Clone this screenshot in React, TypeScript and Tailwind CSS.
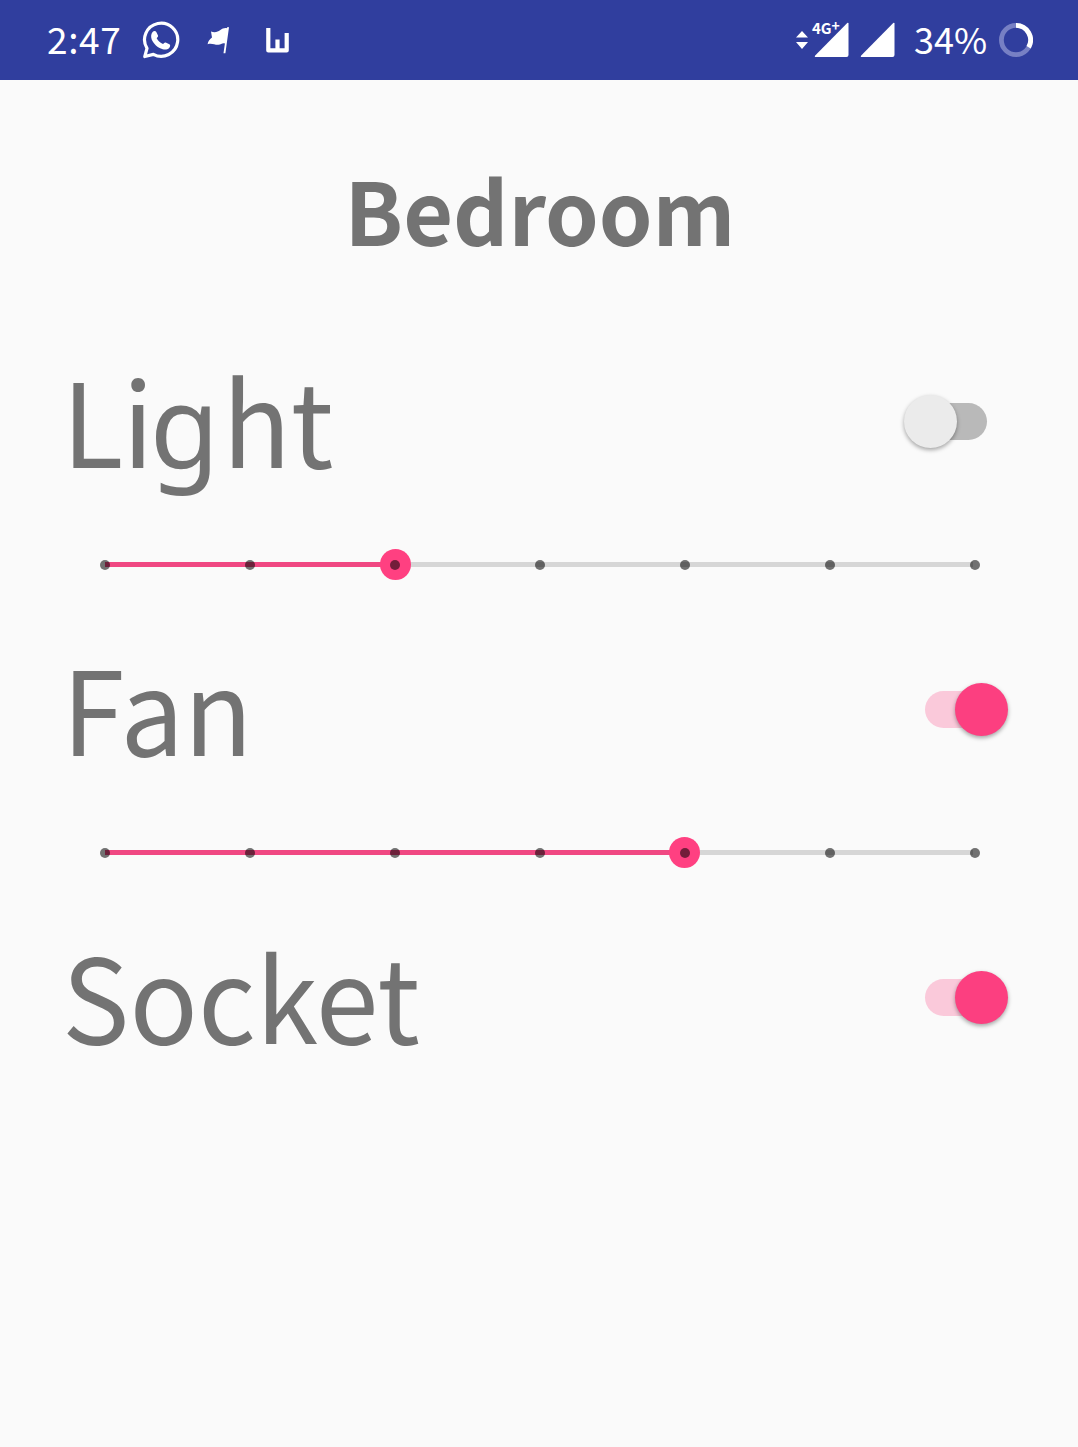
import type { ReactNode } from "react";

const steps = [0, 1, 2, 3, 4, 5, 6];

function Switch({ on }: { on: boolean }) {
  return (
    <div
      role="switch"
      aria-checked={on}
      className={`relative h-[37px] w-[62px] rounded-full ${on ? "bg-[#fac9da]" : "bg-[#b9b9b9]"}`}
    >
      <span
        className={`absolute top-[-8px] size-[53px] rounded-full shadow-[0_2px_4px_rgba(0,0,0,0.35)] ${
          on ? "left-[30px] bg-[#fc3f80]" : "left-[-21px] bg-[#ebebeb]"
        }`}
      />
    </div>
  );
}

function Slider({ value }: { value: number }) {
  return (
    <div className="flex h-36 items-center px-[105px] pb-[2px]">
      <div className="relative h-[5px] w-[870px] bg-[#d6d6d6]">
        <div className="h-full bg-[#f04882]" style={{ width: value * 145 }} />
        <span
          className="absolute top-[-13px] size-[31px] -translate-x-[15px] rounded-full bg-[#ff4081]"
          style={{ left: value * 144.8 }}
        />
        {steps.map((s) => (
          <span
            key={s}
            className="absolute top-[-2px] size-[10px] -translate-x-[5px] rounded-full bg-black/55"
            style={{ left: s * 145 }}
          />
        ))}
      </div>
    </div>
  );
}

function Row({ label, on }: { label: ReactNode; on: boolean }) {
  return (
    <div className="flex h-36 items-center justify-between pr-[91px] pl-[62px]">
      <span className="mt-[-8px] block origin-left scale-x-[0.975] text-[116px] leading-[144px] whitespace-nowrap text-[#737373]">
        {label}
      </span>
      <Switch on={on} />
    </div>
  );
}

function StatusBar() {
  return (
    <header className="flex h-20 items-center bg-[#303e9e] text-[36px] leading-none text-white">
      <span className="mt-[-4px] ml-[47px] w-[74px] text-[37px] tracking-[0.6px] whitespace-nowrap">2:47</span>
      <svg className="ml-[21px] size-[38px]" viewBox="0 0 38 38" fill="none">
        <path d="M2.8 35.5 5 27.4A16.6 16.6 0 1 1 11.4 33.4Z" stroke="white" strokeWidth="3.2" strokeLinejoin="round" />
        <path
          d="M10.600 11c1-1.300 3-1.400 3.700 0l1.700 3.600c.4 1-.7 2-1.300 2.700 1.500 2.700 3.600 4.600 6.300 5.800.7-.7 1.700-2 2.700-1.600l3.700 1.800c1.300.7.7 2.600-.2 3.600-1.600 1.700-4.200 2-6.500 1.300-5-1.500-9.300-5.600-11-9.800-1-2.800-.6-5.600.9-7.400Z"
          fill="white"
        />
      </svg>
      <svg className="ml-[27px] h-[28px] w-[22px]" viewBox="0 0 22 28" fill="white">
        <path d="M4 5.500C8 7 11 5.700 13 4.200C15.500 2.400 17.500 1.800 20 2.200L20.400 1 22 1.200 18.400 27.300H16.500L17.900 17.500C15.500 16.500 14 18.500 11.500 18.800C8 19.200 5 16.800 .6 18.200C1 15 3 13.200 5 11.500Z" />
      </svg>
      <svg className="ml-[37px] h-[25px] w-[23px]" viewBox="0 0 23 25" fill="none" stroke="white">
        <path d="M2.300 0V22.400H20.700V5M11.500 11.500V22.400" strokeWidth="4.200" strokeLinejoin="round" />
      </svg>
      <div className="ml-auto flex items-center">
        <svg className="h-[18px] w-[12px]" viewBox="0 0 12 18" fill="white">
          <path d="M6 0 12 6.500H0ZM6 18 0 11H12Z" />
        </svg>
        <div className="relative ml-[6px] h-9 w-[35px]">
          <svg className="size-full" viewBox="0 0 35 36" fill="white">
            <path d="M34.500 1V33Q34.500 35 32.500 35H2Q0 35 1.200 33.500L33.500 .8Z" />
          </svg>
          <span className="absolute top-[-2px] left-[-2px] text-[15px] leading-4 font-bold">
            4G<span className="absolute top-[-3px] left-full text-[14px]">+</span>
          </span>
        </div>
        <svg className="ml-[11px] h-9 w-[35px]" viewBox="0 0 35 36" fill="white">
          <path d="M34.500 1V33Q34.500 35 32.500 35H2Q0 35 1.200 33.500L33.500 .8Z" />
        </svg>
        <span className="mt-[-4px] ml-[19px] w-[73px] whitespace-nowrap">34%</span>
        <svg className="mr-[45px] ml-[12px] size-[34px]" viewBox="0 0 34 34" fill="none" strokeWidth="4.800">
          <circle cx="17" cy="17" r="14.600" stroke="#7780c4" />
          <path d="M17 2.400A14.600 14.600 0 0 1 29.600 24.300" stroke="white" />
        </svg>
      </div>
    </header>
  );
}

export default function App() {
  return (
    <div className="h-[1447px] w-[1078px] overflow-hidden bg-[#fafafa] font-['Noto_Sans_CJK_SC','Noto_Sans',sans-serif]">
      <StatusBar />
      <main>
        <h1 className="flex h-[269px] origin-[541px] scale-x-[0.988] justify-center pt-[68px] pl-[2px] text-[87px] leading-[120px] font-bold text-[#737373]">
          Bedroom
        </h1>
        <Row
          label={
            <>
              <span className="tracking-[-1px]">Li</span>
              <span className="mr-[3px] ml-[-3px] font-['Noto_Sans'] leading-none">g</span>
              <span>ht</span>
            </>
          }
          on={false}
        />
        <Slider value={2} />
        <Row label="Fan" on />
        <Slider value={4} />
        <Row label="Socket" on />
      </main>
    </div>
  );
}
